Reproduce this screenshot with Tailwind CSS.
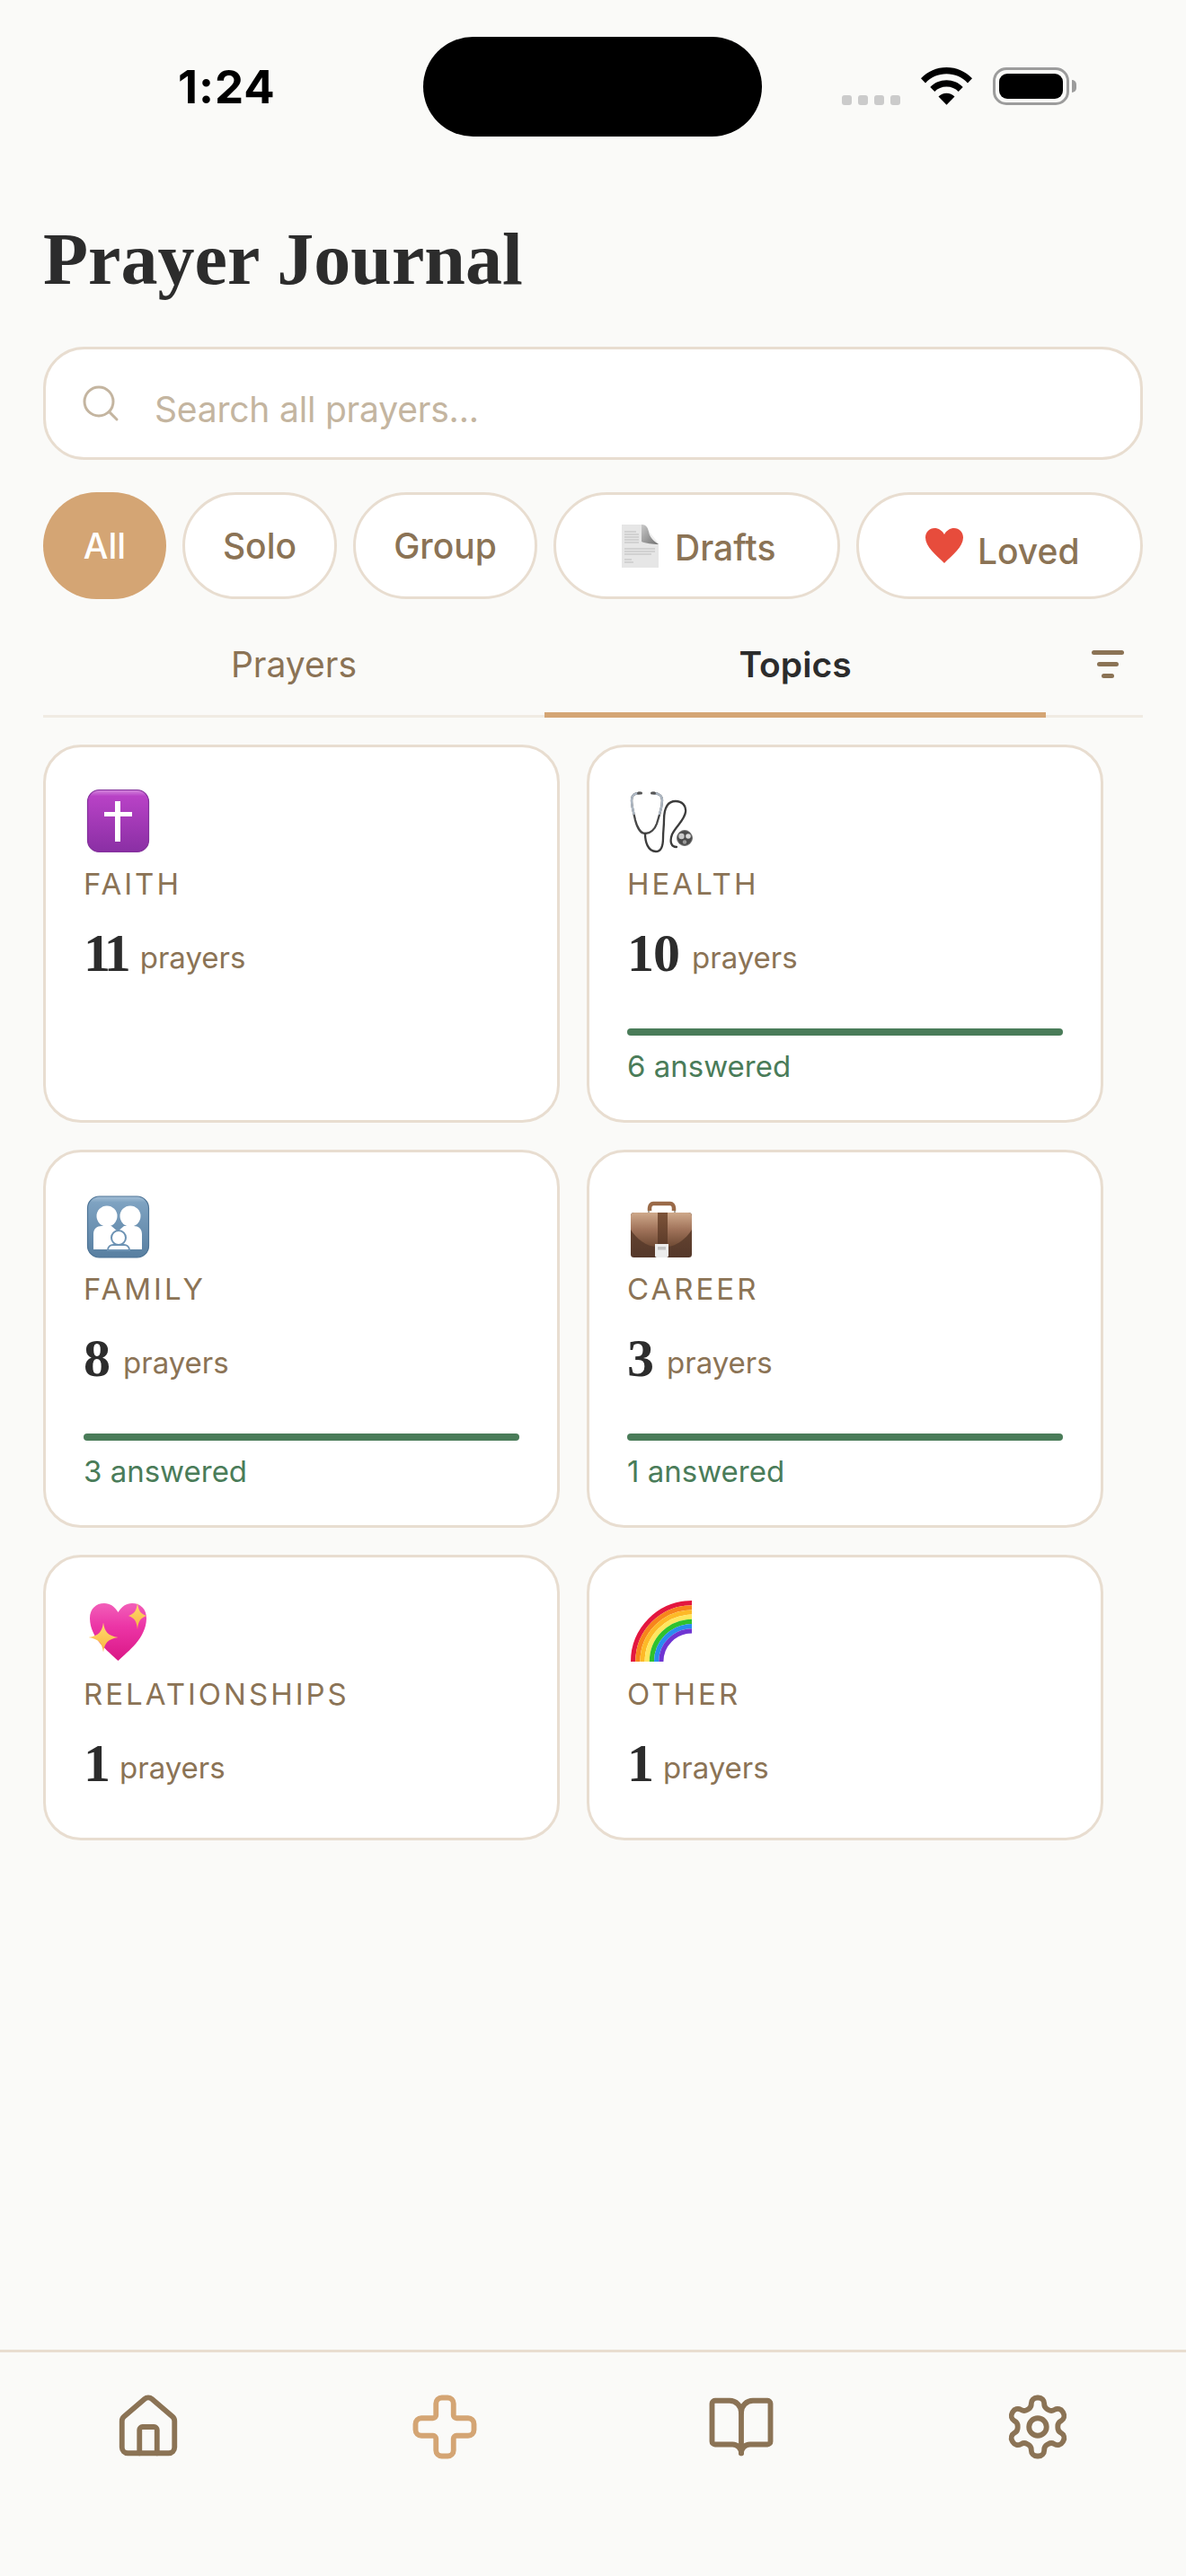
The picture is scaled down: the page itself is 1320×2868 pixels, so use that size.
<!DOCTYPE html>
<html lang="en">
<head>
    <meta charset="UTF-8">
    <meta name="viewport" content="width=device-width, initial-scale=1.0">
    <title>Prayer Journal</title>
    <script src="https://cdn.jsdelivr.net/npm/@tailwindcss/browser@4"></script>
</head>
<body class="bg-[#fafaf8] font-['Inter',sans-serif]">
<div class="h-[2868px] w-[1320px] flex flex-col overflow-hidden">

    <!-- status bar -->
    <div class="h-[152px] pt-[41px] flex items-start">
        <div class="w-[471px] h-[111px] pl-[198px] flex items-center text-[51px] font-bold leading-none text-black tracking-[1px]">1:24</div>
        <div class="w-[377px] h-[111px] rounded-full bg-black"></div>
        <div class="h-[111px] pl-[89px] pt-[34px] flex items-start">
            <div class="mt-[31px] flex gap-[7px]">
                <span class="w-[11px] h-[11px] rounded-[3px] bg-[#cbcbcb]"></span>
                <span class="w-[11px] h-[11px] rounded-[3px] bg-[#cbcbcb]"></span>
                <span class="w-[11px] h-[11px] rounded-[3px] bg-[#cbcbcb]"></span>
                <span class="w-[11px] h-[11px] rounded-[3px] bg-[#cbcbcb]"></span>
            </div>
            <svg class="ml-[23px]" width="57" height="42" viewBox="0 0 57 42"><path fill="#000" d="M28.500 0C17.500 0 7.500 4.300 0 12.300l5 5.100C11.200 10.900 19.400 7.300 28.500 7.300s17.300 3.600 23.500 10.100l5-5.100C49.500 4.300 39.500 0 28.500 0z"/><path fill="#000" d="M28.500 14.300c-7.100 0-13.500 2.800-18.200 7.600l5 5.100c3.400-3.400 8-5.400 13.200-5.400s9.800 2 13.200 5.400l5-5.100c-4.700-4.800-11.100-7.600-18.200-7.600z"/><path fill="#000" d="M28.500 28.800c-3.500 0-6.700 1.400-9 3.700L28.500 41.700l9-9.200c-2.300-2.300-5.500-3.700-9-3.700z"/></svg>
            <div class="ml-[23px] w-[85px] h-[42px] rounded-[15px] border-[3px] border-[#9c9c9c] p-[4px]">
                <div class="w-full h-full rounded-[9px] bg-black"></div>
            </div>
            <div class="ml-[3px] mt-[14px] w-[5px] h-[14px] rounded-r-full bg-[#9c9c9c]"></div>
        </div>
    </div>

    <!-- header -->
    <h1 class="mt-[91px] pl-[48px] h-[92px] font-['Liberation_Serif',serif] text-[82px] leading-[92px] font-bold text-[#2c2c2c]">Prayer Journal</h1>

    <!-- search -->
    <div class="mt-[51px] mx-[48px] h-[126px] rounded-[46px] border-[3px] border-[#e8ddd0] bg-white pl-[37px] flex items-center gap-[36px]">
        <svg width="48" height="48" viewBox="0 0 24 24" fill="none" stroke="#c4b5a0" stroke-width="1.500" stroke-linecap="round" stroke-linejoin="round"><circle cx="11" cy="11" r="8"/><path d="m21 21-4.300-4.300"/></svg>
        <span class="pt-[14px] text-[39px] tracking-[-0.2px] text-[#c4b5a0]">Search all prayers...</span>
    </div>

    <!-- filter chips -->
    <div class="mt-[36px] mx-[48px] flex gap-[18px] text-[39px] font-medium text-[#8b7355] leading-none">
        <div class="w-[137px] h-[119px] rounded-full bg-[#d4a574] text-white flex items-center justify-center">All</div>
        <div class="w-[172px] h-[119px] rounded-full bg-white border-[3px] border-[#e8ddd0] flex items-center justify-center">Solo</div>
        <div class="w-[205px] h-[119px] rounded-full bg-white border-[3px] border-[#e8ddd0] flex items-center justify-center">Group</div>
        <div class="w-[319px] h-[119px] rounded-full bg-white border-[3px] border-[#e8ddd0] pl-[73px] flex items-center gap-[17px]">
            <svg width="42" height="48" viewBox="0 0 42 48">
                <defs><linearGradient id="curl" x1="0" y1="0" x2="1" y2="1"><stop offset="0" stop-color="#c9c9c9"/><stop offset="1" stop-color="#6f6f6f"/></linearGradient></defs>
                <path fill="#e6e6e6" d="M0 0h23l18 22v26H0z"/>
                <path fill="#efefef" d="M24 0l17 21-10-3z"/>
                <path fill="url(#curl)" d="M22 0c5 0 7 3 8 8 1 6 5 10 11 14-6 0-15-1-19-3z"/>
                <path stroke="#bdbdbd" stroke-width="1" d="M3 8h13M3 11h16M3 14h16M3 17h16M3 20h16M3 27h34M3 30h34M3 33h30M3 39h8M3 42h10"/>
            </svg>
            <span class="pt-[3px]">Drafts</span>
        </div>
        <div class="w-[319px] h-[119px] rounded-full bg-white border-[3px] border-[#e8ddd0] pl-[74px] flex items-center gap-[16px]">
            <svg width="42" height="39" viewBox="0 0 42 39"><path fill="#e74c3c" d="M21 39C12 30 0 21 0 10.500 0 4.500 4.500 0 10 0c4.700 0 8.700 2.700 11 7 2.300-4.300 6.300-7 11-7 5.500 0 10 4.500 10 10.500C42 21 30 30 21 39z"/></svg>
            <span class="pt-[12px]">Loved</span>
        </div>
    </div>

    <!-- tabs -->
    <div class="mt-[26px] mx-[48px] h-[106px] relative flex border-b-[3px] border-[#f0ebe3] text-[39px] leading-none">
        <div class="w-[558px] h-[106px] pb-[14px] flex items-center justify-center text-[#8b7355]">Prayers</div>
        <div class="w-[558px] h-[106px] pb-[8px] flex items-center justify-center font-semibold text-[#2c2c2c] border-b-[6px] border-[#d4a574]">Topics</div>
        <div class="flex-1 h-[106px] pb-[14px] flex flex-col items-end justify-center gap-[8px] pr-[21px]">
            <span class="w-[36px] h-[5px] rounded-full bg-[#8b7355]"></span>
            <span class="w-[24px] h-[5px] mr-[6px] rounded-full bg-[#8b7355]"></span>
            <span class="w-[14px] h-[5px] mr-[11px] rounded-full bg-[#8b7355]"></span>
        </div>
    </div>

    <!-- topic cards -->
    <div class="mt-[30px] ml-[48px] grid grid-cols-[575px_575px] gap-[30px]">

        <div class="h-[421px] rounded-[42px] border-[3px] border-[#e8ddd0] bg-white pt-[45px] pl-[42px] pr-[42px] flex flex-col">
            <svg width="75" height="75" viewBox="0 0 75 75">
                <defs><linearGradient id="faith" x1="0" y1="0" x2="0" y2="1"><stop offset="0" stop-color="#d487dd"/><stop offset=".1" stop-color="#b842c6"/><stop offset="1" stop-color="#8a2fa4"/></linearGradient></defs>
                <rect x="4.500" y="2.500" width="68" height="69" rx="13" fill="url(#faith)" stroke="#83309b" stroke-width="1.200"/>
                <path fill="#fff" d="M35 15h6v12h13v5H41v28h-6V32H23v-5h12z"/>
            </svg>
            <div class="mt-[10px] text-[33px] leading-[44px] tracking-[3px] text-[#8b7355]">FAITH</div>
            <div class="mt-[19px] h-[72px] flex items-center gap-[14px]"><span class="font-['Liberation_Serif',serif] text-[60px] font-bold tracking-[-4px] text-[#2c2c2c]">11</span><span class="pt-[12px] text-[33px] text-[#8b7355]">prayers</span></div>
        </div>

        <div class="h-[421px] rounded-[42px] border-[3px] border-[#e8ddd0] bg-white pt-[45px] pl-[42px] pr-[42px] flex flex-col">
            <svg width="75" height="75" viewBox="0 0 75 75" fill="none" stroke-linecap="round">
                <path stroke="#474747" stroke-width="2.300" d="M14 6C7 6 5 9 5 14c0 8 3 16 4 22 2 8 6 15 11 15 6 0 11-5 13-11 3-10 6-18 6-26 0-5-4-8-10-8"/>
                <path stroke="#aeb8c4" stroke-width="2.300" d="M14 6C7 6 5 9 5 14c0 6 1.500 11 2.500 15M29 6c6 0 10 3 10 8 0 5-1 10-3 15"/>
                <path stroke="#3c3c3c" stroke-width="2.300" d="M20 51c0 9 3 20 12 20 6 0 8-7 8-15 0-8 1-12 1-20 0-8 1-21 13-21 7 0 12 5 11 12-1 9-10 15-15 25-3 8-1 14 5 14"/>
                <rect x="11" y="4.500" width="6" height="3" rx="1.500" fill="#555" stroke="none"/>
                <rect x="26" y="4.500" width="6" height="3" rx="1.500" fill="#555" stroke="none"/>
                <circle cx="64" cy="56" r="8.500" fill="#4b4b4b" stroke="#777" stroke-width="1"/>
                <circle cx="60.500" cy="54" r="3.200" fill="#c9c9c9" stroke="none"/>
                <circle cx="68" cy="54" r="2.800" fill="#d9d9d9" stroke="none"/>
                <circle cx="64" cy="60.500" r="2.200" fill="#9a9a9a" stroke="none"/>
            </svg>
            <div class="mt-[10px] text-[33px] leading-[44px] tracking-[3px] text-[#8b7355]">HEALTH</div>
            <div class="mt-[19px] h-[72px] flex items-center gap-[14px]"><span class="font-['Liberation_Serif',serif] text-[60px] font-bold tracking-[-1px] text-[#2c2c2c]">10</span><span class="pt-[12px] text-[33px] text-[#8b7355]">prayers</span></div>
            <div class="mt-[48px] h-[8px] rounded-full bg-[#4a7c59]"></div>
            <div class="mt-[12px] text-[33px] leading-[44px] text-[#4a7c59]">6 answered</div>
        </div>

        <div class="h-[421px] rounded-[42px] border-[3px] border-[#e8ddd0] bg-white pt-[45px] pl-[42px] pr-[42px] flex flex-col">
            <svg width="75" height="75" viewBox="0 0 75 75">
                <defs><linearGradient id="family" x1="0" y1="0" x2="0" y2="1"><stop offset="0" stop-color="#a5c0d8"/><stop offset=".1" stop-color="#7ea2c1"/><stop offset="1" stop-color="#587fa1"/></linearGradient></defs>
                <rect x="4.500" y="4" width="68" height="68" rx="13" fill="url(#family)" stroke="#4d7395" stroke-width="1.200"/>
                <g fill="#fff">
                    <circle cx="26" cy="26" r="11.500"/>
                    <circle cx="52" cy="26" r="11.500"/>
                    <path d="M11 63V46c0-6 4-9 9-9h11l7 6 7-6h11c5 0 9 3 9 9v17H11z"/>
                </g>
                <g fill="#fff" stroke="#6c92b3" stroke-width="2">
                    <circle cx="39" cy="50" r="8"/>
                    <path d="M27 64c0-4 3-6 6-6h12c3 0 6 2 6 6z"/>
                </g>
            </svg>
            <div class="mt-[10px] text-[33px] leading-[44px] tracking-[3px] text-[#8b7355]">FAMILY</div>
            <div class="mt-[19px] h-[72px] flex items-center gap-[14px]"><span class="font-['Liberation_Serif',serif] text-[60px] font-bold text-[#2c2c2c]">8</span><span class="pt-[12px] text-[33px] text-[#8b7355]">prayers</span></div>
            <div class="mt-[48px] h-[8px] rounded-full bg-[#4a7c59]"></div>
            <div class="mt-[12px] text-[33px] leading-[44px] text-[#4a7c59]">3 answered</div>
        </div>

        <div class="h-[421px] rounded-[42px] border-[3px] border-[#e8ddd0] bg-white pt-[45px] pl-[42px] pr-[42px] flex flex-col">
            <svg width="75" height="75" viewBox="0 0 75 75">
                <defs>
                    <linearGradient id="caseTop" x1="0" y1="0" x2="0" y2="1"><stop offset="0" stop-color="#cfa98b"/><stop offset=".5" stop-color="#a0735a"/><stop offset="1" stop-color="#6f4a34"/></linearGradient>
                    <linearGradient id="caseBody" x1="0" y1="0" x2="0" y2="1"><stop offset="0" stop-color="#6e4a34"/><stop offset="1" stop-color="#55382a"/></linearGradient>
                    <linearGradient id="caseStrap" x1="0" y1="0" x2="0" y2="1"><stop offset="0" stop-color="#7d5339"/><stop offset="1" stop-color="#5d3c2a"/></linearGradient>
                </defs>
                <path fill="none" stroke="#8f8578" stroke-width="1.500" d="M24 23v-5M53 23v-5"/>
                <path fill="none" stroke="#9a6a48" stroke-width="4.500" d="M25 20v-3c0-3 2-5 4-5h19c2 0 4 2 4 5v3"/>
                <rect x="4" y="22" width="68" height="50" rx="3.500" fill="url(#caseBody)"/>
                <path fill="url(#caseTop)" d="M4 26c0-2.500 1.500-4 4-4h60c2.500 0 4 1.500 4 4v15c-6 10-18 19-28 19H32C22 60 10 51 4 41z"/>
                <path fill="url(#caseStrap)" d="M34 22h11v35H34z"/>
                <path fill="#ececec" d="M31 57h15v13c0 1-1 2-2 2H33c-1 0-2-1-2-2z"/>
                <rect x="34" y="60" width="9" height="3.500" fill="#c4c4c4"/>
            </svg>
            <div class="mt-[10px] text-[33px] leading-[44px] tracking-[3px] text-[#8b7355]">CAREER</div>
            <div class="mt-[19px] h-[72px] flex items-center gap-[14px]"><span class="font-['Liberation_Serif',serif] text-[60px] font-bold text-[#2c2c2c]">3</span><span class="pt-[12px] text-[33px] text-[#8b7355]">prayers</span></div>
            <div class="mt-[48px] h-[8px] rounded-full bg-[#4a7c59]"></div>
            <div class="mt-[12px] text-[33px] leading-[44px] text-[#4a7c59]">1 answered</div>
        </div>

        <div class="h-[318px] rounded-[42px] border-[3px] border-[#e8ddd0] bg-white pt-[45px] pl-[42px] pr-[42px] flex flex-col">
            <svg width="75" height="75" viewBox="0 0 75 75">
                <defs>
                    <linearGradient id="pinkHeart" x1="0" y1="0" x2="0" y2="1"><stop offset="0" stop-color="#f25fb9"/><stop offset=".4" stop-color="#ec35a6"/><stop offset="1" stop-color="#da1786"/></linearGradient>
                    <linearGradient id="spark" x1="0" y1="0" x2="0" y2="1"><stop offset="0" stop-color="#ffdc70"/><stop offset="1" stop-color="#f9b340"/></linearGradient>
                </defs>
                <path fill="url(#pinkHeart)" d="M38.500 70C27 59 7.500 45 7 23 6.800 12 14 6 23 6c6.500 0 11.500 3.500 15.500 10C42.500 9.500 47.500 6 54 6c9 0 16.200 6 16 17-.5 22-20 36-31.500 47z"/>
                <path fill="url(#spark)" d="M60 5c1 9 3 12.500 10 15-7 2.500-9 6-10 15-1-9-3-12.500-10-15 7-2.500 9-6 10-15z"/>
                <path fill="url(#spark)" d="M22 27.500c1.500 10.500 5 14.500 16.500 16.500C27 46 23.500 50 22 60.500 20.500 50 17 46 5.500 44 17 42 20.500 38 22 27.500z"/>
            </svg>
            <div class="mt-[10px] text-[33px] leading-[44px] tracking-[3px] text-[#8b7355]">RELATIONSHIPS</div>
            <div class="mt-[19px] h-[72px] flex items-center gap-[14px]"><span class="font-['Liberation_Serif',serif] text-[60px] font-bold tracking-[-4px] text-[#2c2c2c]">1</span><span class="pt-[12px] text-[33px] text-[#8b7355]">prayers</span></div>
        </div>

        <div class="h-[318px] rounded-[42px] border-[3px] border-[#e8ddd0] bg-white pt-[45px] pl-[42px] pr-[42px] flex flex-col">
            <svg width="75" height="75" viewBox="0 0 75 75" fill="none" stroke-width="5.200">
                <path stroke="#e3173f" d="M6.600 71A65.400 65.400 0 0 1 72 5.600"/>
                <path stroke="#f7851c" d="M11.800 71A60.200 60.200 0 0 1 72 10.800"/>
                <path stroke="#fdb927" d="M17 71A55 55 0 0 1 72 16"/>
                <path stroke="#ffe75e" d="M22.200 71A49.800 49.800 0 0 1 72 21.200"/>
                <path stroke="#2fc22d" d="M27.400 71A44.600 44.600 0 0 1 72 26.400"/>
                <path stroke="#2a8cf0" d="M32.600 71A39.400 39.400 0 0 1 72 31.600"/>
                <path stroke="#6f35d2" d="M37.800 71A34.200 34.200 0 0 1 72 36.800"/>
            </svg>
            <div class="mt-[10px] text-[33px] leading-[44px] tracking-[3px] text-[#8b7355]">OTHER</div>
            <div class="mt-[19px] h-[72px] flex items-center gap-[14px]"><span class="font-['Liberation_Serif',serif] text-[60px] font-bold tracking-[-4px] text-[#2c2c2c]">1</span><span class="pt-[12px] text-[33px] text-[#8b7355]">prayers</span></div>
        </div>
    </div>

    <div class="flex-1"></div>

    <!-- bottom nav -->
    <div class="h-[252px] border-t-[3px] border-[#e8ddd0] pt-[44px] grid grid-cols-4 justify-items-center items-start">
        <svg width="78" height="78" viewBox="0 0 24 24" fill="none" stroke="#8b7355" stroke-width="1.800" stroke-linecap="round" stroke-linejoin="round"><path d="M15 21v-8a1 1 0 0 0-1-1h-4a1 1 0 0 0-1 1v8"/><path d="M3 10a2 2 0 0 1 .709-1.528l7-5.999a2 2 0 0 1 2.582 0l7 5.999A2 2 0 0 1 21 10v9a2 2 0 0 1-2 2H5a2 2 0 0 1-2-2z"/></svg>
        <svg width="78" height="78" viewBox="0 0 24 24" fill="none" stroke="#d4a574" stroke-width="1.800" stroke-linecap="round" stroke-linejoin="round"><path d="M4 9a2 2 0 0 0-2 2v2a2 2 0 0 0 2 2h4a1 1 0 0 1 1 1v4a2 2 0 0 0 2 2h2a2 2 0 0 0 2-2v-4a1 1 0 0 1 1-1h4a2 2 0 0 0 2-2v-2a2 2 0 0 0-2-2h-4a1 1 0 0 1-1-1V4a2 2 0 0 0-2-2h-2a2 2 0 0 0-2 2v4a1 1 0 0 1-1 1z"/></svg>
        <svg width="78" height="78" viewBox="0 0 24 24" fill="none" stroke="#8b7355" stroke-width="1.800" stroke-linecap="round" stroke-linejoin="round"><path d="M12 7v14"/><path d="M3 18a1 1 0 0 1-1-1V4a1 1 0 0 1 1-1h5a4 4 0 0 1 4 4 4 4 0 0 1 4-4h5a1 1 0 0 1 1 1v13a1 1 0 0 1-1 1h-6a3 3 0 0 0-3 3 3 3 0 0 0-3-3z"/></svg>
        <svg width="78" height="78" viewBox="0 0 24 24" fill="none" stroke="#8b7355" stroke-width="1.800" stroke-linecap="round" stroke-linejoin="round"><path d="M12.220 2h-.44a2 2 0 0 0-2 2v.18a2 2 0 0 1-1 1.730l-.43.25a2 2 0 0 1-2 0l-.15-.08a2 2 0 0 0-2.730.73l-.22.38a2 2 0 0 0 .73 2.730l.15.1a2 2 0 0 1 1 1.720v.51a2 2 0 0 1-1 1.740l-.15.09a2 2 0 0 0-.73 2.730l.22.38a2 2 0 0 0 2.730.73l.15-.08a2 2 0 0 1 2 0l.43.25a2 2 0 0 1 1 1.730V20a2 2 0 0 0 2 2h.44a2 2 0 0 0 2-2v-.18a2 2 0 0 1 1-1.730l.43-.25a2 2 0 0 1 2 0l.15.08a2 2 0 0 0 2.730-.73l.22-.39a2 2 0 0 0-.73-2.730l-.15-.08a2 2 0 0 1-1-1.740v-.5a2 2 0 0 1 1-1.740l.15-.09a2 2 0 0 0 .73-2.730l-.22-.38a2 2 0 0 0-2.730-.73l-.15.08a2 2 0 0 1-2 0l-.43-.25a2 2 0 0 1-1-1.730V4a2 2 0 0 0-2-2z"/><circle cx="12" cy="12" r="3"/></svg>
    </div>
</div>
</body>
</html>
